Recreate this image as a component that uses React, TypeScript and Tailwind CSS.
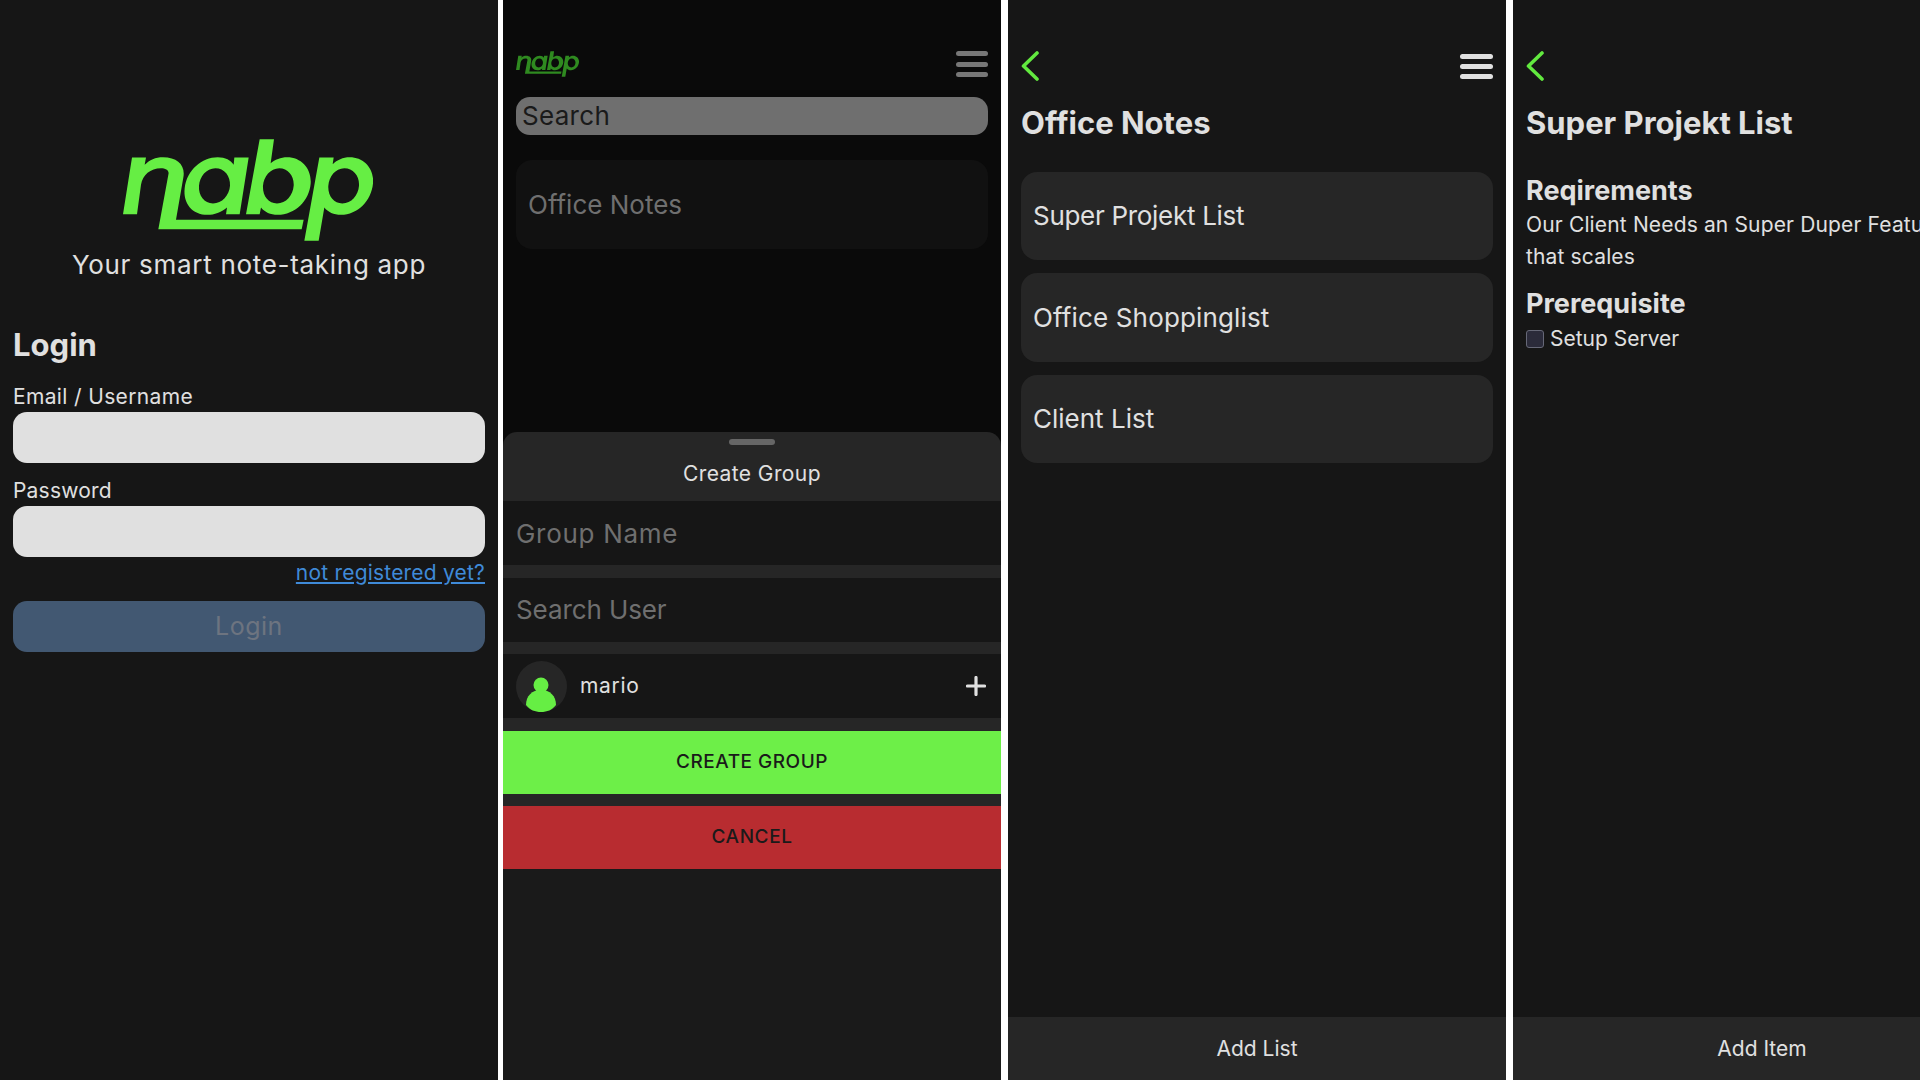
const font = { fontFamily: 'Inter, "Noto Sans", sans-serif' };

function Logo({ className }: { className: string }) {
  return (
    <svg viewBox="68 43 750 305" className={className} fill="currentColor">
      <path d="M95 98H137L133 120C148 105 165 97 188 97C232 97 256 122 249 158L227 285H610L604 313H174L204 150C208 136 196 130 182 130C150 130 127 150 122 180L110 268H68Z" />
      <path fillRule="evenodd" d="M402 98H445L418 268H377L380 248C362 263 342 270 322 270C275 270 248 235 253 190C259 135 305 97 352 97C375 97 392 106 400 120ZM345 130C318 130 298 155 296 183C294 213 312 236 338 236C365 236 387 212 389 183C391 153 372 130 345 130Z" />
      <path fillRule="evenodd" d="M478 43H521L511 115C523 104 542 97 560 97C604 97 634 132 631 176C627 228 584 270 532 270C510 270 493 262 482 248L478 268H437ZM537 130C510 130 490 155 488 183C486 213 504 236 530 236C557 236 578 212 580 183C582 153 563 130 537 130Z" />
      <path fillRule="evenodd" d="M657 98H700L697 118C710 105 728 97 748 97C792 97 822 132 818 176C813 228 772 270 722 270C700 270 683 262 672 248L655 348H612ZM732 130C705 130 686 155 684 183C682 213 700 236 726 236C753 236 774 212 776 183C778 153 759 130 732 130Z" />
    </svg>
  );
}

function Back() {
  return (
    <svg width="18" height="30" viewBox="0 0 18 30" fill="none" stroke="#62e93f" strokeWidth="3.6" strokeLinecap="round" strokeLinejoin="round">
      <path d="M16 2L2.5 15L16 28" />
    </svg>
  );
}

function LoginPanel() {
  return (
    <div className="flex w-[498px] shrink-0 flex-col bg-[#161616] px-[13px] pt-[139px]">
      <Logo className="ml-[110px] h-[102px] w-[250px] text-[#66ee44]" />
      <p className="mt-[8px] text-center text-[26px] leading-[32px] tracking-[0.7px] text-[#e0e0e0]">Your smart note-taking app</p>
      <h2 className="mt-[44px] text-[31px] font-bold leading-[40px] text-[#e0e0e0]">Login</h2>
      <label className="mt-[19px] text-[21px] leading-[26px] tracking-[0.35px] text-[#e0e0e0]">Email / Username</label>
      <div className="mt-[2px] h-[51px] rounded-[14px] bg-[#e0e0e0]" />
      <label className="mt-[15px] text-[21px] leading-[26px] tracking-[0.2px] text-[#e0e0e0]">Password</label>
      <div className="mt-[2px] h-[51px] rounded-[14px] bg-[#e0e0e0]" />
      <a className="mt-[3px] self-end text-[21px] leading-[26px] tracking-[0.2px] text-[#3f8ad8] underline">not registered yet?</a>
      <button className="mt-[15px] h-[51px] rounded-[14px] bg-[#425872] text-[25px] tracking-[0.5px] text-[#6d7480]">Login</button>
    </div>
  );
}

function SheetRow({ label, tracking }: { label: string; tracking: string }) {
  return <div className={`flex h-[64px] items-center bg-[#161616] px-[13px] text-[26px] text-[#6f6f6f] ${tracking}`}>{label}</div>;
}

function GroupPanel() {
  return (
    <div className="ml-[5px] flex w-[498px] shrink-0 flex-col bg-[#0a0a0a]">
      <div className="flex h-[432px] flex-col px-[13px] pt-[51px]">
        <div className="flex items-start justify-between">
          <Logo className="h-[26px] w-[63px] text-[#2f8a20]" />
          <div className="flex w-[32px] flex-col gap-[5.5px]">
            <div className="h-[5px] rounded-full bg-[#777777]" />
            <div className="h-[5px] rounded-full bg-[#777777]" />
            <div className="h-[5px] rounded-full bg-[#777777]" />
          </div>
        </div>
        <div className="mt-[19.5px] flex h-[38.5px] items-center rounded-[14px] bg-[#6f6f6f] px-[6px] text-[26px] tracking-[0.3px] text-[#1a1a1a]">Search</div>
        <div className="mt-[25px] flex h-[89px] items-center rounded-[16px] bg-[#111111] px-[12px] text-[26px] text-[#6f6f6f]">Office Notes</div>
      </div>
      <div className="flex flex-1 flex-col rounded-t-[14px] bg-[#262626]">
        <div className="flex h-[69px] flex-col items-center">
          <div className="mt-[7px] h-[6px] w-[46px] rounded-full bg-[#666666]" />
          <p className="mt-[14px] text-[21px] leading-[30px] tracking-[0.4px] text-[#e0e0e0]">Create Group</p>
        </div>
        <div className="flex flex-col gap-[12.5px]">
          <SheetRow label="Group Name" tracking="tracking-[0.7px]" />
          <SheetRow label="Search User" tracking="tracking-[-0.1px]" />
          <div className="flex h-[64px] items-center justify-between bg-[#161616] px-[13px]">
            <div className="flex items-center gap-[13px]">
              <svg width="51" height="51" viewBox="0 0 51 51">
                <circle cx="25.5" cy="25.5" r="25.5" fill="#262626" />
                <circle cx="25" cy="24" r="7.5" fill="#66ee44" />
                <path d="M10 44C10 35 16 29 25 29C34 29 40 35 40 44C36 49 31 51 25 51C19 51 14 49 10 44Z" fill="#66ee44" />
              </svg>
              <span className="text-[21px] tracking-[0.7px] text-[#e0e0e0]">mario</span>
            </div>
            <svg width="20" height="20" viewBox="0 0 20 20" className="mr-[2px]" stroke="#e0e0e0" strokeWidth="3.2" strokeLinecap="round">
              <path d="M10 1.5V18.5M1.5 10H18.5" />
            </svg>
          </div>
          <button className="h-[63px] bg-[#6def48] text-[19px] font-medium tracking-[0.5px] text-[#1a1a1a]">CREATE GROUP</button>
          <button className="h-[63px] bg-[#b82c30] text-[19px] font-medium tracking-[0.6px] text-[#1a1a1a]">CANCEL</button>
        </div>
        <div className="flex-1 bg-[#1a1a1a]" />
      </div>
    </div>
  );
}

function ListsPanel() {
  const lists = [
    { name: 'Super Projekt List', tracking: 'tracking-[-0.3px]' },
    { name: 'Office Shoppinglist', tracking: 'tracking-[0.15px]' },
    { name: 'Client List', tracking: 'tracking-normal' },
  ];
  return (
    <div className="ml-[7px] flex w-[498px] shrink-0 flex-col bg-[#161616]">
      <div className="flex flex-1 flex-col px-[13px] pt-[51px]">
        <div className="flex items-center justify-between">
          <Back />
          <div className="flex w-[33px] flex-col gap-[5px]">
            <div className="h-[5px] rounded-full bg-[#e0e0e0]" />
            <div className="h-[5px] rounded-full bg-[#e0e0e0]" />
            <div className="h-[5px] rounded-full bg-[#e0e0e0]" />
          </div>
        </div>
        <h1 className="mt-[23px] text-[31px] font-bold leading-[38px] text-[#e0e0e0]">Office Notes</h1>
        <div className="mt-[29.5px] flex flex-col gap-[13px]">
          {lists.map((list) => (
            <div key={list.name} className={`flex h-[88.5px] items-center rounded-[16px] bg-[#262626] px-[12px] text-[26px] text-[#e0e0e0] ${list.tracking}`}>
              {list.name}
            </div>
          ))}
        </div>
      </div>
      <div className="flex h-[63px] items-center justify-center bg-[#262626] text-[21px] text-[#e0e0e0]">Add List</div>
    </div>
  );
}

function DetailPanel() {
  return (
    <div className="ml-[7px] flex w-[498px] shrink-0 flex-col bg-[#161616]">
      <div className="flex flex-1 flex-col px-[13px] pt-[51px]">
        <Back />
        <h1 className="mt-[23px] text-[31px] font-bold leading-[38px] text-[#e0e0e0]">Super Projekt List</h1>
        <h3 className="mt-[33px] text-[27px] font-bold leading-[32px] text-[#e0e0e0]">Reqirements</h3>
        <p className="mt-[2px] text-[21px] leading-[32px] tracking-[0.15px] text-[#e0e0e0]">
          Our Client Needs an Super Duper Feature
          <br />
          that scales
        </p>
        <h3 className="mt-[15px] text-[27px] font-bold leading-[32px] text-[#e0e0e0]">Prerequisite</h3>
        <div className="mt-[5px] flex items-center gap-[6px]">
          <div className="h-[18px] w-[18px] rounded-[3px] border border-[#666877] bg-[#2b2b3a]" />
          <span className="text-[21px] leading-[28px] text-[#e0e0e0]">Setup Server</span>
        </div>
      </div>
      <div className="flex h-[63px] items-center justify-center bg-[#262626] text-[21px] text-[#e0e0e0]">Add Item</div>
    </div>
  );
}

export default function App() {
  return (
    <div className="flex h-[1080px] w-[1920px] overflow-hidden bg-white" style={font}>
      <LoginPanel />
      <GroupPanel />
      <ListsPanel />
      <DetailPanel />
    </div>
  );
}
